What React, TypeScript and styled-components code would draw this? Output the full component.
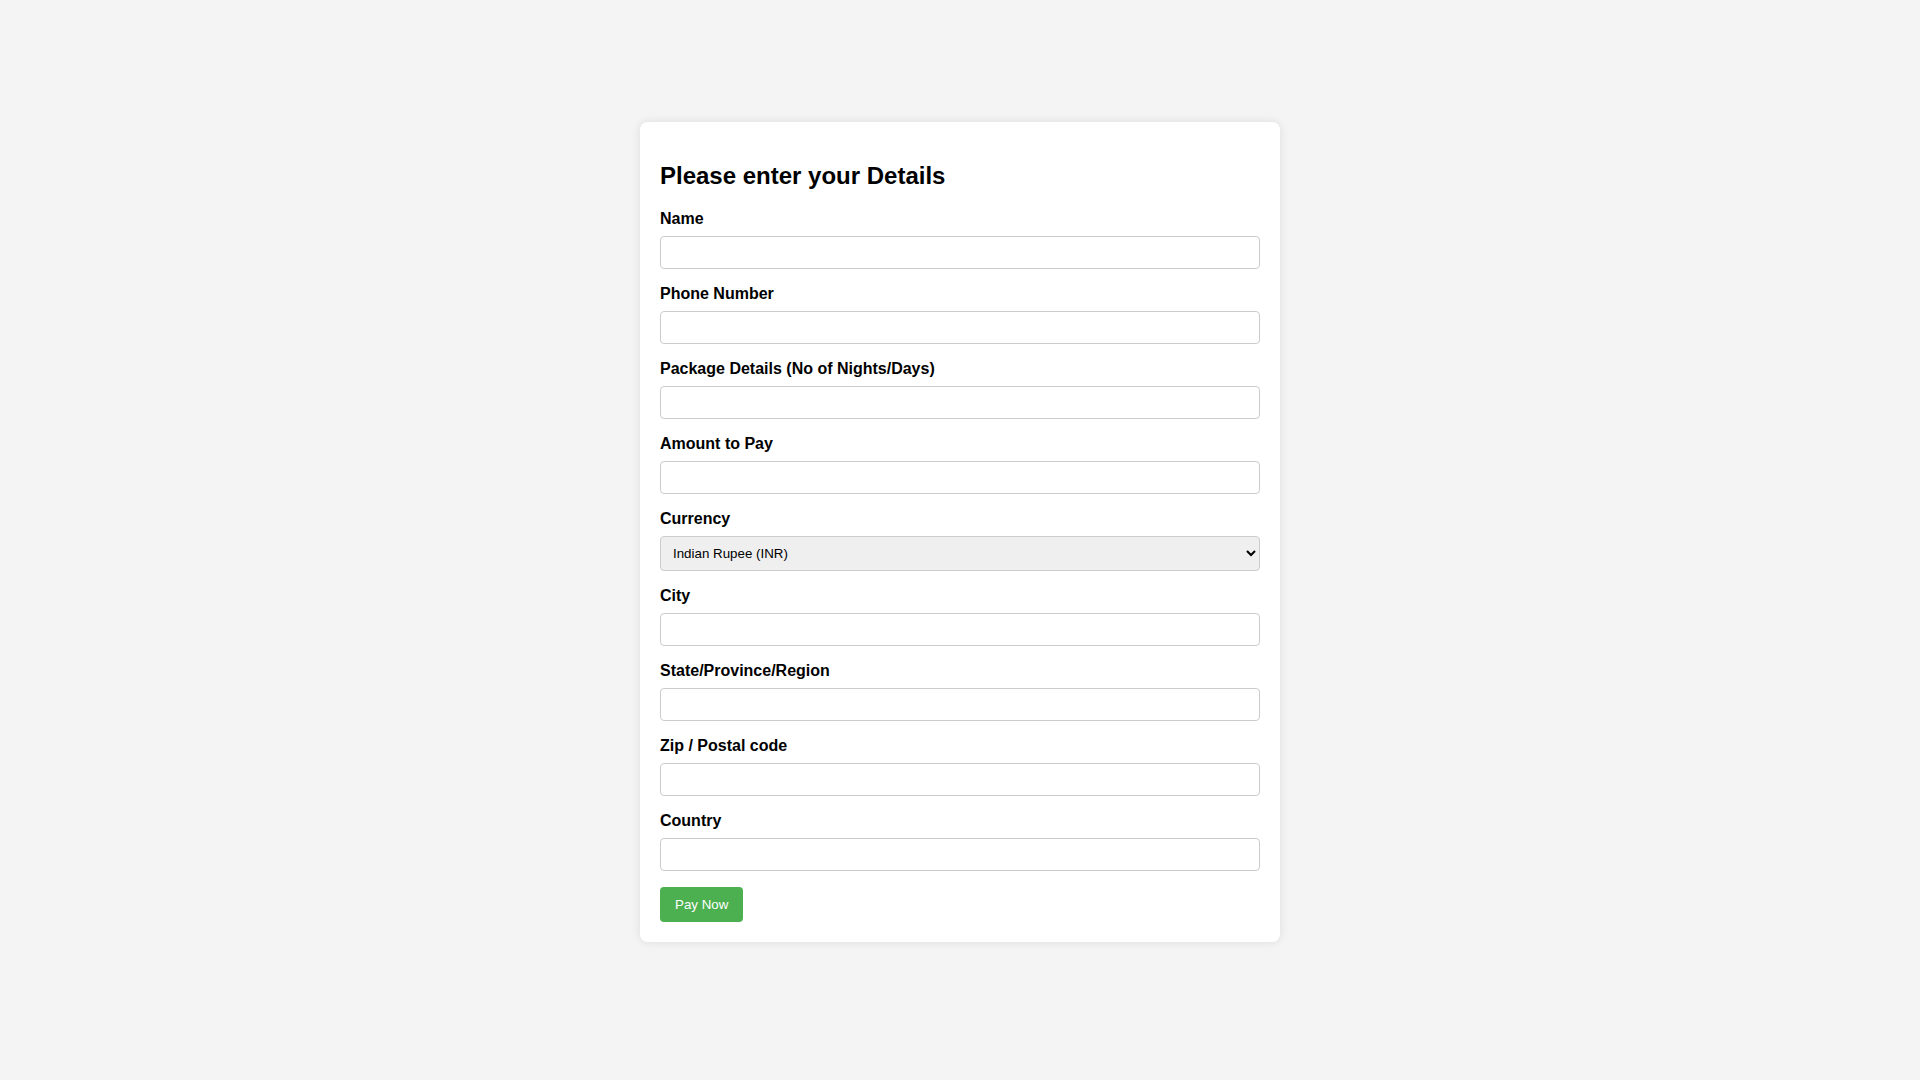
import React from "react";
import styled, { createGlobalStyle } from "styled-components";

const GlobalStyle = createGlobalStyle`
  html, body {
    margin: 0;
    padding: 0;
    background: #f4f4f4;
    font-family: "Liberation Sans", Arial, sans-serif;
  }
  *, *::before, *::after { box-sizing: border-box; }
`;

const Page = styled.div`
  display: flex;
  justify-content: center;
  padding-top: 122px;
  min-height: 1080px;
`;

const Card = styled.form`
  width: 640px;
  background: #ffffff;
  padding: 20px;
  border-radius: 8px;
  box-shadow: 0 0 10px rgba(0, 0, 0, 0.1);
  align-self: flex-start;
`;

const Title = styled.h2`
  font-size: 24px;
  font-weight: bold;
  margin: 20px 0;
  color: #000;
`;

const Label = styled.label`
  display: block;
  font-size: 16px;
  font-weight: bold;
  margin-bottom: 8px;
  color: #000;
`;

const Input = styled.input`
  display: block;
  width: 100%;
  padding: 8px;
  margin: 0 0 16px 0;
  border: 1px solid #ccc;
  border-radius: 4px;
  font-family: "Liberation Sans", Arial, sans-serif;
  font-size: 13.333px;
  background: #fff;
`;

const Select = styled.select`
  display: block;
  width: 100%;
  padding: 8px;
  margin: 0 0 16px 0;
  border: 1px solid #ccc;
  border-radius: 4px;
  font-family: "Liberation Sans", Arial, sans-serif;
  font-size: 13.333px;
  background-color: #efefef;
  color: #000;
`;

const Button = styled.button`
  display: inline-block;
  padding: 10px 15px;
  background: #4caf50;
  color: #fff;
  border: none;
  border-radius: 4px;
  font-family: "Liberation Sans", Arial, sans-serif;
  font-size: 13.333px;
  cursor: pointer;
`;

const fields = [
  "Name",
  "Phone Number",
  "Package Details (No of Nights/Days)",
  "Amount to Pay",
];
const fields2 = ["City", "State/Province/Region", "Zip / Postal code", "Country"];

export default function App() {
  return (
    <>
      <GlobalStyle />
      <Page>
        <Card onSubmit={(e) => e.preventDefault()}>
          <Title>Please enter your Details</Title>
          {fields.map((f) => (
            <div key={f}>
              <Label>{f}</Label>
              <Input type="text" />
            </div>
          ))}
          <Label>Currency</Label>
          <Select defaultValue="INR">
            <option value="INR">Indian Rupee (INR)</option>
            <option value="USD">US Dollar (USD)</option>
          </Select>
          {fields2.map((f) => (
            <div key={f}>
              <Label>{f}</Label>
              <Input type="text" />
            </div>
          ))}
          <Button type="submit">Pay Now</Button>
        </Card>
      </Page>
    </>
  );
}
